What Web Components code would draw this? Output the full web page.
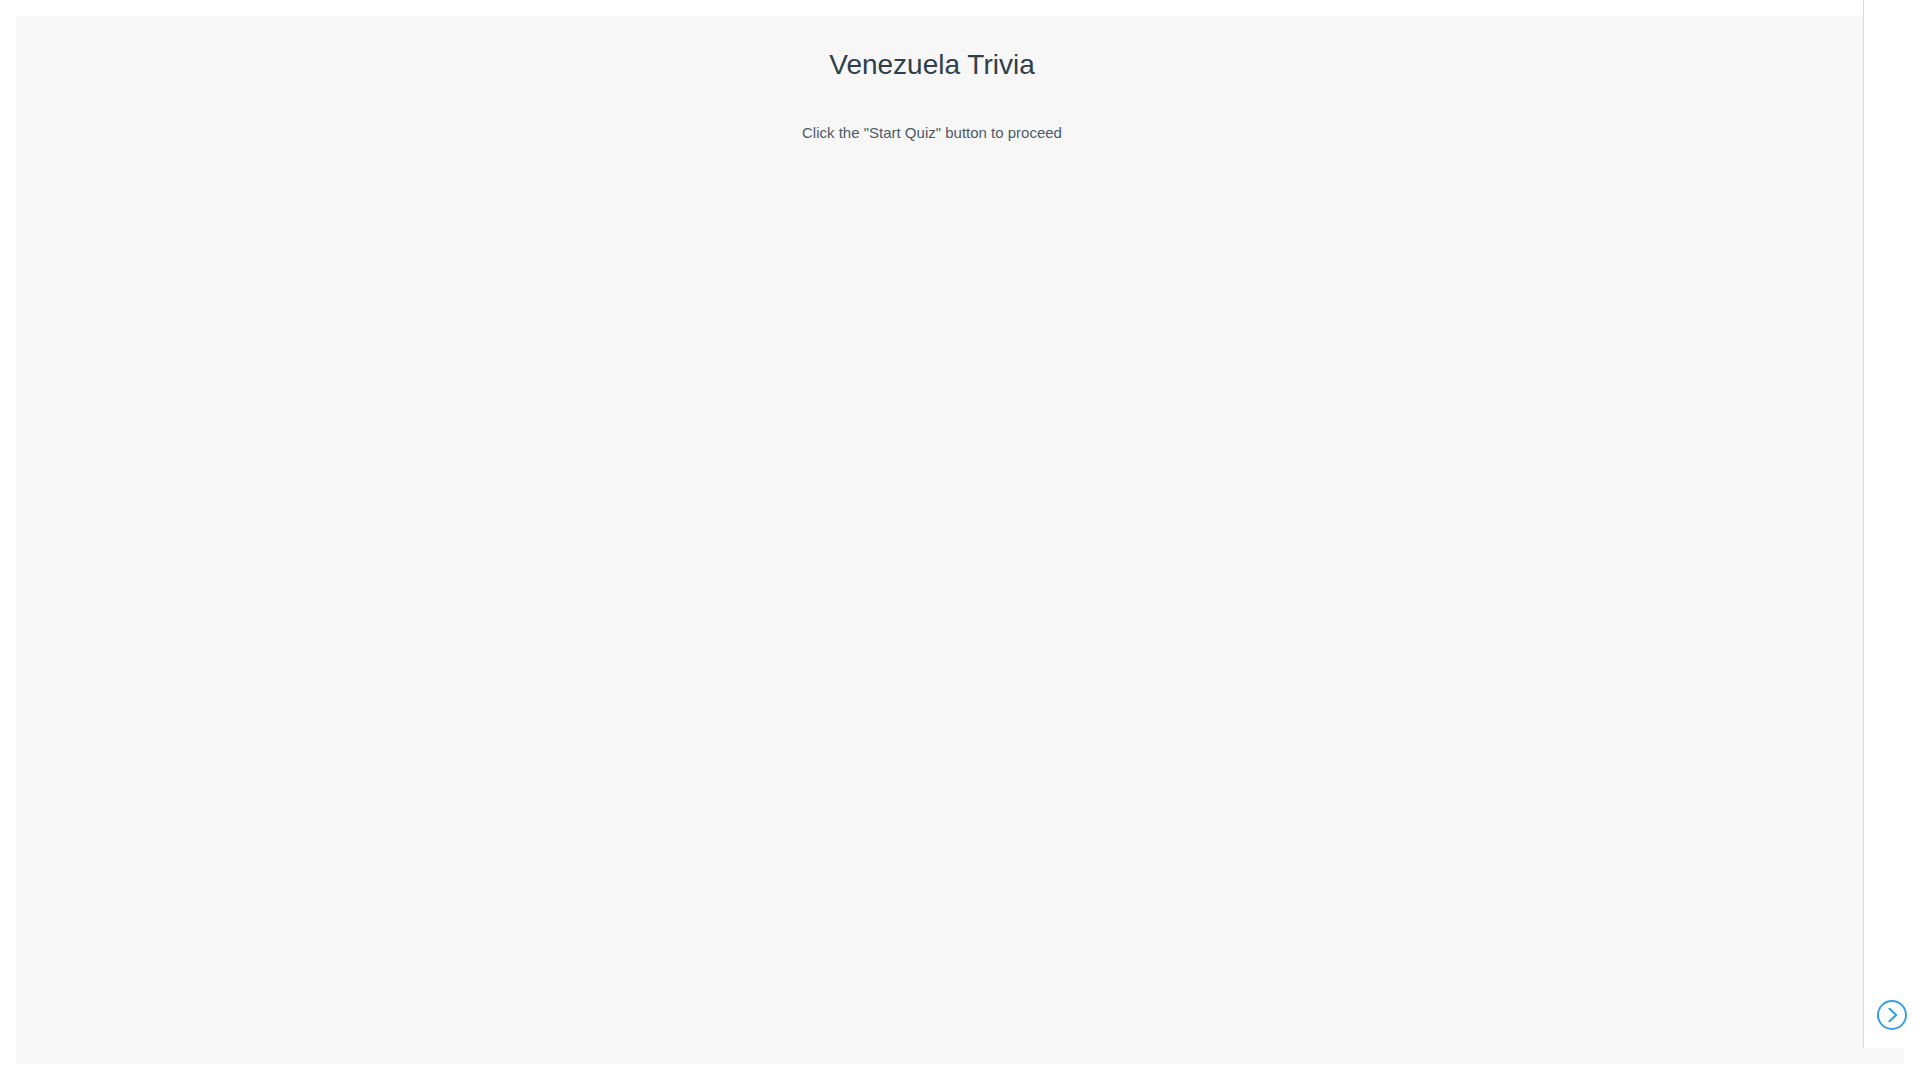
<!DOCTYPE html>
<html lang="en">
<head>
<meta charset="utf-8">
<title>Venezuela Trivia</title>
<style>
    body {
        margin: 0;
        background-color: #ffffff;
        font-family: "Liberation Sans", Arial, sans-serif;
    }
</style>
</head>
<body>
<quiz-app>
    <quiz-intro>
        <span slot="title">Venezuela Trivia</span>
        Click the "Start Quiz" button to proceed
    </quiz-intro>
    <quiz-sidebar slot="sidebar">
        <quiz-toggle></quiz-toggle>
    </quiz-sidebar>
</quiz-app>
<script>
// page frame: grey quiz area with the side panel over its right edge
class QuizApp extends HTMLElement {
    constructor() {
        super()
        this.attachShadow({ mode: 'open' })
        this.shadowRoot.innerHTML = `
            <style>
                :host {
                    display: flex;
                    position: relative;
                    box-sizing: border-box;
                    min-height: 100vh;
                    padding: 16px;
                }
                main {
                    flex: 1;
                    box-sizing: border-box;
                    padding: 32px 56px 32px 0;
                    background-color: #f7f7f7;
                }
            </style>
            <main><slot></slot></main>
            <slot name="sidebar"></slot>
        `
    }
}
// title and instructions
class QuizIntro extends HTMLElement {
    constructor() {
        super()
        this.attachShadow({ mode: 'open' })
        this.shadowRoot.innerHTML = `
            <style>
                :host {
                    display: flex;
                    flex-direction: column;
                    align-items: center;
                    gap: 40px;
                    text-align: center;
                }
                h1 {
                    margin: 0;
                    font-size: 28px;
                    font-weight: 400;
                    line-height: 34px;
                    color: #2f3f4b;
                }
                p {
                    margin: 0;
                    font-size: 15px;
                    line-height: 22px;
                    color: #4e5b66;
                }
            </style>
            <h1><slot name="title"></slot></h1>
            <p><slot></slot></p>
        `
    }
}
// collapsed side panel
class QuizSidebar extends HTMLElement {
    constructor() {
        super()
        this.attachShadow({ mode: 'open' })
        this.shadowRoot.innerHTML = `
            <style>
                :host {
                    position: absolute;
                    top: 0;
                    right: 0;
                    bottom: 32px;
                    display: block;
                    width: 56px;
                    border-left: 1px solid #dadada;
                    background-color: #ffffff;
                }
                aside {
                    display: flex;
                    flex-direction: column;
                    align-items: center;
                    justify-content: flex-end;
                    box-sizing: border-box;
                    height: 100%;
                    padding-bottom: 18px;
                }
            </style>
            <aside><slot></slot></aside>
        `
    }
}
class QuizToggle extends HTMLElement {
    constructor() {
        super()
        this.attachShadow({ mode: 'open' })
        this.shadowRoot.innerHTML = `
            <style>
                :host {
                    display: block;
                }
                button {
                    display: block;
                    padding: 0;
                    border: 0;
                    background: none;
                    color: #3b9fe0;
                    cursor: pointer;
                }
                svg {
                    display: block;
                }
            </style>
            <button type="button" aria-label="Toggle panel">
                <svg width="30" height="30" viewBox="0 0 30 30" fill="none" stroke="currentColor" aria-hidden="true">
                    <circle cx="15" cy="15" r="14" stroke-width="2"/>
                    <path d="M12.5 8.8 19.2 15l-6.7 6.2" stroke-width="2.2" stroke-linecap="round" stroke-linejoin="round"/>
                </svg>
            </button>
        `
    }
    connectedCallback() {
        this.shadowRoot.querySelector('button').addEventListener('click', () => {
            this.dispatchEvent(new CustomEvent('toggle-panel', { bubbles: true, composed: true }))
        })
    }
}
customElements.define('quiz-app', QuizApp)
customElements.define('quiz-intro', QuizIntro)
customElements.define('quiz-sidebar', QuizSidebar)
customElements.define('quiz-toggle', QuizToggle)
</script>
</body>
</html>
